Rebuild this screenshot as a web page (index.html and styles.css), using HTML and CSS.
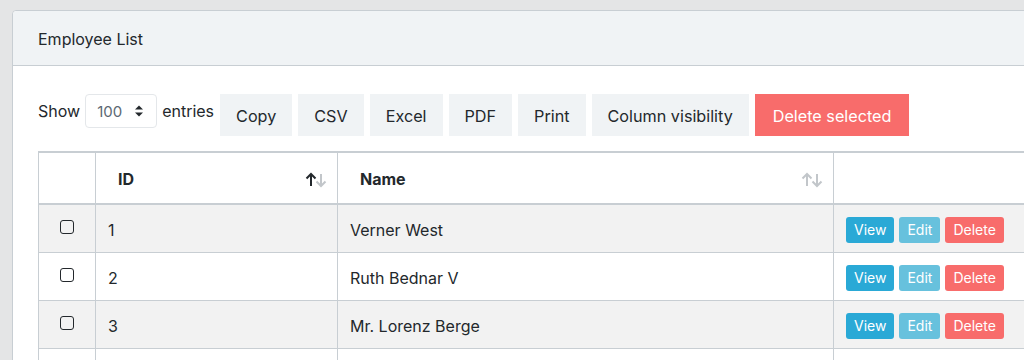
FILE: index.html
```html
<!DOCTYPE html>
<html>
<head>
<meta charset="utf-8">
<link rel="stylesheet" href="styles.css">
</head>
<body>
<div class="card">
  <div class="card-header">Employee List</div>
  <div class="card-body">
    <div class="toolbar">
      <label class="length">Show
        <span class="select">100
          <svg class="spin" width="10" height="14" viewBox="0 0 10 14"><path d="M1 5.5 L5 1.5 L9 5.5 Z M1 8.5 L5 12.5 L9 8.5 Z" fill="#23282c"/></svg>
        </span>
        entries</label>
      <div class="buttons">
        <button class="btn">Copy</button>
        <button class="btn">CSV</button>
        <button class="btn">Excel</button>
        <button class="btn">PDF</button>
        <button class="btn">Print</button>
        <button class="btn">Column visibility</button>
        <button class="btn btn-danger">Delete selected</button>
      </div>
    </div>
    <table class="grid">
      <thead>
        <tr>
          <th class="c-check"></th>
          <th class="c-id sortable">ID
            <svg class="sort" width="22" height="16" viewBox="0 0 22 16"><path d="M6 14 V2 M1.5 6.5 L6 2 L10.5 6.5" stroke="#23282c" stroke-width="2" fill="none"/><path d="M16 2 V14 M11.5 9.5 L16 14 L20.5 9.5" stroke="#c2c6ca" stroke-width="2" fill="none"/></svg>
          </th>
          <th class="c-name sortable">Name
            <svg class="sort" width="22" height="16" viewBox="0 0 22 16"><path d="M6 14 V2 M1.5 6.5 L6 2 L10.5 6.5" stroke="#c2c6ca" stroke-width="2" fill="none"/><path d="M16 2 V14 M11.5 9.5 L16 14 L20.5 9.5" stroke="#c2c6ca" stroke-width="2" fill="none"/></svg>
          </th>
          <th class="c-act"></th>
        </tr>
      </thead>
      <tbody>
        <tr class="odd">
          <td class="c-check"><span class="box"></span></td>
          <td>1</td>
          <td>Verner West</td>
          <td class="acts"><span class="sm view">View</span><span class="sm edit">Edit</span><span class="sm del">Delete</span></td>
        </tr>
        <tr>
          <td class="c-check"><span class="box"></span></td>
          <td>2</td>
          <td>Ruth Bednar V</td>
          <td class="acts"><span class="sm view">View</span><span class="sm edit">Edit</span><span class="sm del">Delete</span></td>
        </tr>
        <tr class="odd">
          <td class="c-check"><span class="box"></span></td>
          <td>3</td>
          <td>Mr. Lorenz Berge</td>
          <td class="acts"><span class="sm view">View</span><span class="sm edit">Edit</span><span class="sm del">Delete</span></td>
        </tr>
        <tr>
          <td class="c-check"><span class="box"></span></td>
          <td>4</td>
          <td>Ms. Ada Kuhn</td>
          <td class="acts"><span class="sm view">View</span><span class="sm edit">Edit</span><span class="sm del">Delete</span></td>
        </tr>
      </tbody>
    </table>
  </div>
</div>
</body>
</html>
```
FILE: styles.css
```css
html, body {
  margin: 0;
  background: #e4e5e6;
  overflow: hidden;
  height: 360px;
}
body {
  padding: 10px 0 0 12px;
  font-family: "Inter", "Liberation Sans", sans-serif;
  color: #23282c;
  font-size: 16px;
}
.card {
  width: 1160px;
  background: #fff;
  border: 1px solid #c8ced3;
  border-radius: 4px;
}
.card-header {
  background: #f0f3f5;
  border-bottom: 1px solid #c8ced3;
  border-radius: 4px 4px 0 0;
  height: 55px;
  box-sizing: border-box;
  padding: 2px 25px 0;
  display: flex;
  align-items: center;
  font-size: 16px;
}
.card-body {
  padding: 28px 25px 0 25px;
}
.toolbar {
  display: flex;
  align-items: flex-start;
  gap: 6px;
}
.length {
  display: flex;
  align-items: center;
  gap: 5px;
  height: 34px;
  font-size: 16px;
}
.select {
  display: inline-flex;
  align-items: center;
  justify-content: space-between;
  width: 72px;
  height: 34px;
  box-sizing: border-box;
  border: 1px solid #e4e7ea;
  border-radius: 4px;
  padding: 0 12px 0 11px;
  font-size: 15px;
  color: #5c6873;
}
.buttons {
  display: flex;
  gap: 6px;
}
.btn {
  font-family: inherit;
  font-size: 16.2px;
  color: #23282c;
  background: #f0f3f5;
  border: 1px solid #f0f3f5;
  height: 42px;
  box-sizing: border-box;
  padding: 2px 15px 0;
  border-radius: 0;
  margin: 0;
}
.btn-danger {
  background: #f86c6b;
  border-color: #f86c6b;
  color: #fff;
  padding: 2px 17px 0;
}
.grid {
  margin-top: 15px;
  width: 1130px;
  border-collapse: collapse;
  border-top: 2px solid #c8ced3;
  font-size: 16px;
}
.grid th, .grid td {
  border-left: 1px solid #c8ced3;
  border-right: 1px solid #c8ced3;
  text-align: left;
  vertical-align: middle;
}
.grid th {
  height: 52px;
  box-sizing: border-box;
  border-bottom: 2px solid #c8ced3;
  font-weight: 700;
  padding: 2px 22px 0;
  position: relative;
}
.grid td {
  height: 48px;
  box-sizing: border-box;
  border-bottom: 1px solid #c8ced3;
  padding: 3px 12px 0;
}
.grid tr.odd td {
  background: #f2f2f2;
}
.c-check { width: 57px; box-sizing: border-box; }
.c-id { width: 242px; box-sizing: border-box; }
.c-name { width: 496px; box-sizing: border-box; }
.grid td.c-check { text-align: center; padding: 0; }
.sort {
  position: absolute;
  right: 10px;
  top: 19px;
}
.box {
  display: inline-block;
  width: 14px;
  height: 14px;
  box-sizing: border-box;
  border: 1.5px solid #23282c;
  border-radius: 3px;
  vertical-align: middle;
  margin-top: -6px;
}
.acts {
  padding-left: 12px;
}
.sm {
  display: inline-flex;
  align-items: center;
  height: 26px;
  padding: 0 8px;
  border-radius: 3px;
  color: #fff;
  font-size: 14px;
  margin-right: 5px;
  box-sizing: border-box;
}
.view { background: #2aa9d6; }
.edit { background: #67c1dd; }
.del { background: #f86c6b; }
```
